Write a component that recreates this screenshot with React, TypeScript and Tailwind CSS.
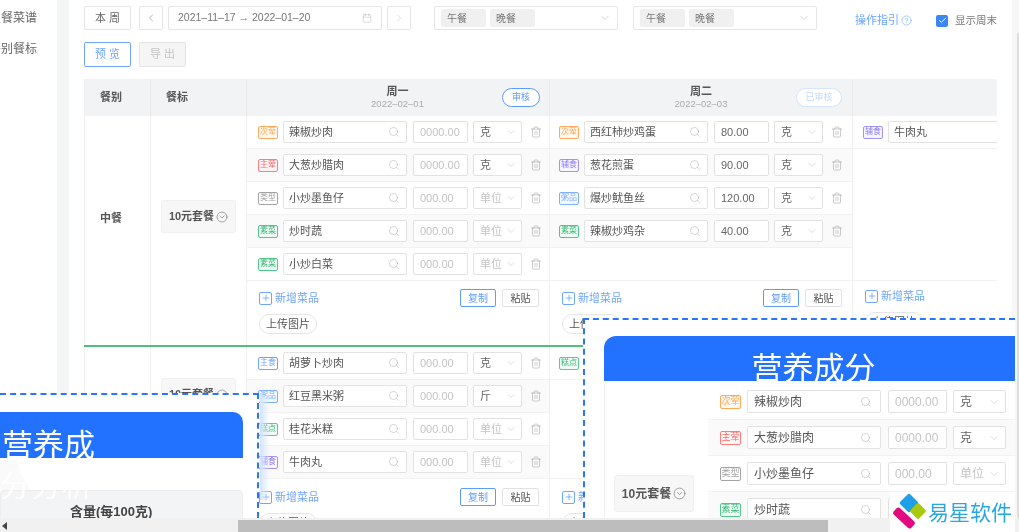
import {
  Calendar,
  Check,
  ChevronDown,
  ChevronLeft,
  ChevronRight,
  CircleChevronDown,
  CircleHelp,
  Plus,
  Search,
  Trash2,
} from 'lucide-react';
import clsx from 'clsx';

type Dish = { tag: string; name: string; amount?: string; hint?: string; unit?: string };

const TAG_STYLES: Record<string, string> = {
  次荤: 'border-[#ffa95c] text-[#ffa95c] bg-[#fff8f0]',
  主荤: 'border-[#ff7d7d] text-[#f56c6c] bg-[#fff3f3]',
  类型: 'border-[#a3a3a3] text-[#a3a3a3] bg-white',
  素菜: 'border-[#4fc98a] text-[#35b673] bg-[#f0fbf5]',
  辅食: 'border-[#a193f8] text-[#8f7ff5] bg-[#f7f5ff]',
  粥品: 'border-[#7fb0ff] text-[#7fb0ff] bg-[#f3f8ff]',
  主食: 'border-[#6ea5ff] text-[#6ea5ff] bg-white',
  糕点: 'border-[#55cc90] text-[#3dbb7b] bg-[#f0fbf5]',
};

const MONDAY: Dish[] = [
  { tag: '次荤', name: '辣椒炒肉', hint: '0000.00', unit: '克' },
  { tag: '主荤', name: '大葱炒腊肉', hint: '0000.00', unit: '克' },
  { tag: '类型', name: '小炒墨鱼仔', hint: '000.00' },
  { tag: '素菜', name: '炒时蔬', hint: '000.00' },
  { tag: '素菜', name: '小炒白菜', hint: '000.00' },
];

const TUESDAY: Dish[] = [
  { tag: '次荤', name: '西红柿炒鸡蛋', amount: '80.00', unit: '克' },
  { tag: '辅食', name: '葱花煎蛋', amount: '90.00', unit: '克' },
  { tag: '粥品', name: '爆炒鱿鱼丝', amount: '120.00', unit: '克' },
  { tag: '素菜', name: '辣椒炒鸡杂', amount: '40.00', unit: '克' },
];

const MONDAY_DINNER: Dish[] = [
  { tag: '主食', name: '胡萝卜炒肉', hint: '000.00', unit: '克' },
  { tag: '粥品', name: '红豆黑米粥', hint: '000.00', unit: '斤' },
  { tag: '糕点', name: '桂花米糕', hint: '000.00' },
  { tag: '辅食', name: '牛肉丸', hint: '000.00' },
];

function Tag({ label, big }: { label: string; big?: boolean }) {
  return (
    <span
      className={clsx(
        'flex shrink-0 items-center justify-center whitespace-nowrap rounded-[2px] border leading-none',
        big ? 'h-[14px] w-[21px] text-[9px]' : 'h-[13px] w-[20px] text-[8px]',
        TAG_STYLES[label],
      )}
    >
      {label}
    </span>
  );
}

function DishRow({ dish, striped, wide, inset = 'pl-[11px]' }: { dish: Dish; striped?: boolean; wide?: boolean; inset?: string }) {
  return (
    <div className={clsx('flex h-[33px] items-center border-b border-[#f2f2f2]', inset, striped && 'bg-[#fafafa]')}>
      <Tag label={dish.tag} />
      <div
        className={clsx(
          'ml-[5px] flex h-[22px] shrink-0 items-center justify-between rounded-[2px] border border-[#e2e2e2] bg-white pl-[5px] pr-[6px]',
          wide ? 'w-[170px]' : 'w-[124px]',
        )}
      >
        <span className="text-[11px] text-[#555]">{dish.name}</span>
        <Search size={12} strokeWidth={1} className="text-[#aaa]" />
      </div>
      <div className="ml-[6px] flex h-[22px] w-[55px] shrink-0 items-center rounded-[2px] border border-[#e2e2e2] bg-white pl-[6px] text-[11px]">
        <span className={dish.amount ? 'text-[#666]' : 'text-[#c4c4c4]'}>{dish.amount ?? dish.hint}</span>
      </div>
      <div className="ml-[5px] flex h-[22px] w-[49px] shrink-0 items-center justify-between rounded-[2px] border border-[#e2e2e2] bg-white pl-[6px] pr-[4px] text-[11px]">
        <span className={dish.unit ? 'text-[#666]' : 'text-[#c4c4c4]'}>{dish.unit ?? '单位'}</span>
        <ChevronDown size={12} strokeWidth={1} className="text-[#bbb]" />
      </div>
      <Trash2 size={12} strokeWidth={1} className="ml-[8px] shrink-0 text-[#999]" />
    </div>
  );
}

function AddDish() {
  return (
    <span className="flex items-center gap-[3px] text-[11px] text-[#6ea5ff]">
      <span className="flex h-[13px] w-[13px] items-center justify-center rounded-[2px] border border-[#6ea5ff]">
        <Plus size={10} strokeWidth={2} />
      </span>
      新增菜品
    </span>
  );
}

function Footer({ note, hideCopy }: { note?: boolean; hideCopy?: boolean }) {
  return (
    <div className="pl-[12px] pr-[10px]">
      <div className="flex h-[18px] items-center justify-between">
        <AddDish />
        {hideCopy ? null : (
          <div className="flex gap-[6px]">
            <span className="flex h-[18px] w-[36px] items-center justify-center rounded-[2px] border border-[#5f9bff] text-[10px] text-[#5f9bff]">
              复制
            </span>
            <span className="flex h-[18px] w-[37px] items-center justify-center rounded-[2px] border border-[#e2e2e2] text-[10px] text-[#555]">
              粘贴
            </span>
          </div>
        )}
      </div>
      <div className="mt-[7px] flex items-center gap-[10px]">
        <span className="flex h-[20px] w-[58px] items-center justify-center rounded-full border border-[#e5e5e5] bg-white text-[11px] text-[#555]">
          上传图片
        </span>
        {note ? (
          <span className="flex items-center gap-1 text-[10px] text-[#999]">
            最后导入文件的名称
            <CircleHelp size={9} strokeWidth={1.25} />
          </span>
        ) : null}
      </div>
    </div>
  );
}

function DayCell({
  dishes,
  children,
  last,
  wide,
  inset,
}: {
  dishes: Dish[];
  children: React.ReactNode;
  last?: boolean;
  wide?: boolean;
  inset?: string;
}) {
  return (
    <div className={clsx('flex flex-col overflow-hidden', !last && 'border-r border-[#f0f0f0]')}>
      <div className="h-[164px]">
        {dishes.map((d, i) => (
          <DishRow key={d.name} dish={d} striped={i % 2 === 1} wide={wide} inset={inset} />
        ))}
      </div>
      <div className="border-t border-[#f2f2f2] pt-[8px]">{children}</div>
    </div>
  );
}

function DinnerCell({ dishes, children, inset }: { dishes: Dish[]; children: React.ReactNode; inset?: string }) {
  return (
    <div className="flex flex-col overflow-hidden border-r border-[#f0f0f0]">
      <div className="h-[131px]">
        {dishes.map((d, i) => (
          <DishRow key={d.name} dish={d} striped={i % 2 === 1} inset={inset} />
        ))}
      </div>
      <div className="border-t border-[#f2f2f2] pt-[9px]">{children}</div>
    </div>
  );
}

function SetMealBox({ big }: { big?: boolean }) {
  return (
    <div
      className={clsx(
        'flex items-center justify-center gap-[2px] rounded-[3px] border border-[#f0f0f0] bg-[#f7f7f7] font-bold text-[#555]',
        big ? 'h-[37px] w-[80px] text-[12px]' : 'h-[33px] w-[75px] text-[11px]',
      )}
    >
      10元套餐
      <CircleChevronDown size={big ? 13 : 12} strokeWidth={1.25} className="text-[#777]" />
    </div>
  );
}

function MealSelect() {
  return (
    <div className="flex h-[24px] w-[184px] items-center justify-between rounded-[2px] border border-[#e5e5e5] pl-[6px] pr-[6px]">
      <div className="flex gap-[4px]">
        <span className="flex h-[18px] w-[45px] items-center rounded-[2px] bg-[#f0f0f0] pl-[6px] text-[10px] text-[#777]">午餐</span>
        <span className="flex h-[18px] w-[45px] items-center rounded-[2px] bg-[#f0f0f0] pl-[6px] text-[10px] text-[#777]">晚餐</span>
      </div>
      <ChevronDown size={12} strokeWidth={1} className="text-[#aaa]" />
    </div>
  );
}

function Toolbar() {
  return (
    <div className="flex h-[24px] items-center text-[#666]">
      <span className="flex h-[24px] w-[47px] items-center justify-center rounded-[2px] border border-[#e5e5e5] text-[11px]">本 周</span>
      <span className="ml-[8px] flex h-[24px] w-[24px] items-center justify-center rounded-[2px] border border-[#e5e5e5]">
        <ChevronLeft size={12} strokeWidth={1} />
      </span>
      <div className="ml-[5px] flex h-[24px] w-[214px] items-center justify-between rounded-[2px] border border-[#e5e5e5] pl-[9px] pr-[9px] text-[10.5px] text-[#777]">
        <span>2021–11–17 → 2022–01–20</span>
        <Calendar size={10} strokeWidth={1} className="text-[#aaa]" />
      </div>
      <span className="ml-[5px] flex h-[24px] w-[24px] items-center justify-center rounded-[2px] border border-[#e5e5e5] text-[#bbb]">
        <ChevronRight size={12} strokeWidth={1} />
      </span>
      <div className="ml-[23px]">
        <MealSelect />
      </div>
      <div className="ml-[15px]">
        <MealSelect />
      </div>
      <span className="ml-[38px] mt-[5px] flex items-center gap-[2px] text-[11px] text-[#6ea5ff]">
        操作指引
        <CircleHelp size={11} strokeWidth={1.25} />
      </span>
      <span className="ml-[24px] mt-[5px] flex items-center gap-[7px] text-[10.5px] text-[#777]">
        <span className="flex h-[12px] w-[12px] items-center justify-center rounded-[2px] bg-[#3f86f5] text-white">
          <Check size={9} strokeWidth={2.5} />
        </span>
        显示周末
      </span>
    </div>
  );
}

function MenuTable() {
  return (
    <div className="mt-[12px] w-[913px] text-[#555]">
      <div className="grid h-[37px] grid-cols-[67px_96px_303px_303px_144px] bg-[#f2f3f5]">
        <div className="flex items-center border-r border-[#eaeaea] pl-[16px] text-[11px] font-bold">餐别</div>
        <div className="flex items-center border-r border-[#eaeaea] pl-[15px] text-[11px] font-bold">餐标</div>
        <div className="relative flex flex-col items-center justify-center border-r border-[#eaeaea] pr-[1px]">
          <span className="text-[11px] font-bold leading-[13px]">周一</span>
          <span className="text-[9.5px] leading-[12px] text-[#aaa]">2022–02–01</span>
          <span className="absolute right-[9px] top-[9px] flex h-[19px] w-[38px] items-center justify-center rounded-full border border-[#5f9bff] bg-white text-[9px] text-[#5f9bff]">审核</span>
        </div>
        <div className="relative flex flex-col items-center justify-center border-r border-[#eaeaea]">
          <span className="text-[11px] font-bold leading-[13px]">周二</span>
          <span className="text-[9.5px] leading-[12px] text-[#aaa]">2022–02–03</span>
          <span className="absolute right-[10px] top-[9px] flex h-[19px] w-[46px] items-center justify-center rounded-full border border-[#d5e4ff] bg-white text-[9px] text-[#c4d9ff]">已审核</span>
        </div>
        <div />
      </div>

      <div className="grid h-[229px] grid-cols-[67px_96px_303px_303px_144px]">
        <div className="border-x border-[#f0f0f0] pl-[15px] pt-[94px] text-[11px] font-bold">中餐</div>
        <div className="border-r border-[#f0f0f0] pl-[10px] pt-[84px]">
          <SetMealBox />
        </div>
        <DayCell dishes={MONDAY}>
          <Footer />
        </DayCell>
        <DayCell dishes={TUESDAY} inset="pl-[9px]">
          <Footer />
        </DayCell>
        <DayCell dishes={[{ tag: '辅食', name: '牛肉丸', hint: '000.00' }]} last wide inset="pl-[10px]">
          <div className="-mt-[2px]">
            <Footer hideCopy />
          </div>
        </DayCell>
      </div>

      <div className="h-[2px] bg-[#4fc07f]" />

      <div className="grid h-[200px] grid-cols-[67px_96px_303px_303px_144px]">
        <div className="border-x border-[#f0f0f0]" />
        <div className="border-r border-[#f0f0f0] pl-[10px] pt-[31px]">
          <SetMealBox />
        </div>
        <DinnerCell dishes={MONDAY_DINNER}>
          <Footer note />
        </DinnerCell>
        <DinnerCell dishes={[{ tag: '糕点', name: '桂花米糕', hint: '000.00' }]} inset="pl-[9px]">
          <Footer />
        </DinnerCell>
        <div />
      </div>
    </div>
  );
}

function NutritionRow({ dish, striped }: { dish: Dish; striped?: boolean }) {
  return (
    <div className={clsx('flex h-[36px] items-center border-b border-[#f2f2f2] pl-[12px]', striped && 'bg-[#fafafa]')}>
      <Tag label={dish.tag} big />
      <div className="ml-[6px] flex h-[23px] w-[134px] shrink-0 items-center justify-between rounded-[2px] border border-[#e2e2e2] bg-white pl-[6px] pr-[8px]">
        <span className="text-[12px] text-[#555]">{dish.name}</span>
        <Search size={12} strokeWidth={1} className="text-[#aaa]" />
      </div>
      <div className="ml-[7px] flex h-[23px] w-[59px] shrink-0 items-center rounded-[2px] border border-[#e2e2e2] bg-white pl-[6px] text-[12px] text-[#c4c4c4]">
        {dish.hint}
      </div>
      <div className="ml-[6px] flex h-[23px] w-[53px] shrink-0 items-center justify-between rounded-[2px] border border-[#e2e2e2] bg-white pl-[6px] pr-[5px] text-[12px]">
        <span className={dish.unit ? 'text-[#666]' : 'text-[#c4c4c4]'}>{dish.unit ?? '单位'}</span>
        <ChevronDown size={12} strokeWidth={1} className="text-[#bbb]" />
      </div>
    </div>
  );
}

function LeftCallout() {
  return (
    <>
      <div className="absolute left-[260px] top-[395px] h-[105px] w-[10px] bg-gradient-to-r from-[#d6e4ff] to-transparent" />
      <div className="absolute left-0 top-[393px] h-[125px] w-[259px] overflow-hidden border-r-2 border-t-2 border-dashed border-[#2a75ff] bg-white pt-[17px]">
        <div className="h-[46px] w-[243px] overflow-hidden rounded-tr-[10px] bg-[#2272ff] pl-[2px] pt-[17px] text-[31px] leading-[34px] text-white">
          营养成
        </div>
        <svg className="absolute left-0 top-[63px]" width="32" height="32" viewBox="0 0 32 32">
          <polygon points="0,2 16,2 30,32 0,32" fill="#fafafa" />
        </svg>
        <div className="mt-[32px] h-[40px] w-[243px] rounded-t-[4px] border border-[#eeeeee] bg-[#f3f4f6] pl-[69px] pt-[12px] text-[13px] font-bold leading-[18px] text-[#444]">
          含量(每100克)
        </div>
        <span className="absolute left-0 top-[71px] text-[31px] leading-[40px] text-white/80">分分析</span>
      </div>
    </>
  );
}

function RightCallout() {
  return (
    <div className="absolute left-[583px] top-[318px] h-[200px] w-[432px] overflow-hidden border-l-2 border-t-2 border-dashed border-[#2a75ff] bg-white pl-[19px] pt-[16px]">
      <div className="h-[45px] overflow-hidden rounded-tl-[12px] bg-[#2272ff] pl-[8px] pt-[16px] text-center text-[31px] leading-[34px] text-white">
        营养成分
      </div>
      <div className="mt-[3px] flex">
        <div className="w-[104px] shrink-0 border-l border-[#f0f0f0] pl-[9px] pt-[91px]">
          <SetMealBox big />
        </div>
        <div className="flex-1 overflow-hidden">
          {MONDAY.slice(0, 4).map((d, i) => (
            <NutritionRow key={d.name} dish={d} striped={i % 2 === 1} />
          ))}
        </div>
      </div>
    </div>
  );
}

function BrandMark() {
  return (
    <div className="absolute left-[890px] top-[492px] flex h-[40px] w-[125px] items-center bg-white pl-[3px]">
      <svg width="34" height="38" viewBox="0 0 34 38">
        <rect x="-7" y="-7" width="14" height="14" rx="2" transform="translate(16 10) rotate(45)" fill="#1e9fe8" />
        <rect x="-6" y="-6" width="12" height="12" rx="1.5" transform="translate(25 18) rotate(45)" fill="#a9c90e" />
        <rect x="-12" y="-4.5" width="24" height="9" rx="2.5" transform="translate(11 25) rotate(43)" fill="#e2087f" />
      </svg>
      <span className="ml-[1px] text-[21px] leading-none text-[#29a7e1]">易星软件</span>
    </div>
  );
}

export default function App() {
  return (
    <div className="relative flex h-[532px] w-[1019px] flex-col overflow-hidden bg-white font-['Liberation_Sans','Noto_Sans_CJK_SC',sans-serif] blur-[0.35px]">
      <div className="flex min-h-0 flex-1">
        <aside className="flex w-[57px] shrink-0 flex-col items-end gap-[19px] overflow-hidden pr-[20px] pt-[10px] text-[12px] leading-[12px] text-[#666]">
          <span className="whitespace-nowrap pt-[2px]">点餐菜谱</span>
          <span className="whitespace-nowrap">餐别餐标</span>
        </aside>
        <div className="w-[12px] shrink-0 bg-[#f4f5f7]" />
        <main className="min-w-0 flex-1 overflow-hidden pl-[15px] pt-[6px]">
          <Toolbar />
          <div className="mt-[12px] flex gap-[8px] text-[11px]">
            <span className="flex h-[25px] w-[47px] items-center justify-center rounded-[2px] border border-[#6ea5ff] text-[#6ea5ff]">预 览</span>
            <span className="flex h-[25px] w-[47px] items-center justify-center rounded-[2px] border border-[#e5e5e5] bg-[#f5f5f5] text-[#c4c4c4]">导 出</span>
          </div>
          <MenuTable />
        </main>
        <div className="w-[7px] shrink-0 bg-[#f7f7f7] pl-[5px] pt-[33px]">
          <div className="h-full w-[2px] bg-[#dedede]" />
        </div>
      </div>
      <div className="h-[14px] shrink-0 bg-[#f1f1f1] pl-[238px] pt-[2px]">
        <div className="h-[12px] w-[590px] bg-[#bdbdbd]" />
      </div>
      <span className="absolute left-[2px] top-[522px] h-0 w-0 border-y-[4px] border-r-[5px] border-y-transparent border-r-[#444]" />
      <LeftCallout />
      <RightCallout />
      <BrandMark />
    </div>
  );
}
